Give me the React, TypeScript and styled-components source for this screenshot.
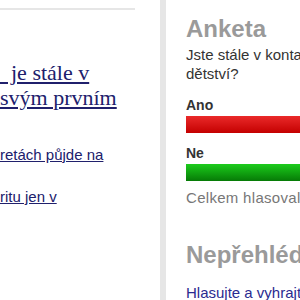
import React from "react";
import styled, { createGlobalStyle } from "styled-components";

const Global = createGlobalStyle`
  html, body { margin: 0; padding: 0; background: #fff; overflow: hidden; }
  body { font-family: "Liberation Sans", Arial, sans-serif; }
`;

const Page = styled.div`
  display: flex;
  width: 300px;
  height: 300px;
  overflow: hidden;
`;

const Main = styled.div`
  width: 160px;
  flex: none;
  padding-top: 8px;
  box-sizing: border-box;
  overflow: hidden;
`;

const TopRule = styled.div`
  width: 135px;
  height: 2px;
  background: #e6e6e6;
`;

const Headline = styled.a`
  display: block;
  margin-top: 50px;
  font-family: "Liberation Serif", Georgia, serif;
  font-size: 22px;
  line-height: 25px;
  color: #20206c;
  text-decoration: underline;
  white-space: nowrap;
`;

const StoryList = styled.ul`
  list-style: none;
  margin: 35px 0 0;
  padding: 0;
  display: flex;
  flex-direction: column;
  gap: 23px;
`;

const StoryLink = styled.a`
  display: block;
  font-size: 15px;
  line-height: 19px;
  color: #20206c;
  text-decoration: underline;
  white-space: nowrap;
`;

const Divider = styled.div`
  width: 6px;
  flex: none;
  background: #e6e6e6;
`;

const Sidebar = styled.aside`
  flex: 1;
  padding: 15px 0 0 20px;
  overflow: hidden;
  white-space: nowrap;
`;

const Heading = styled.h2<{ $gap?: number }>`
  margin: ${(p) => p.$gap ?? 0}px 0 0;
  font-size: 24px;
  line-height: 28px;
  font-weight: bold;
  color: #9a9a9a;
`;

const Question = styled.p`
  margin: 2px 0 0;
  font-size: 15px;
  line-height: 19px;
  color: #333;
`;

const Options = styled.div`
  margin-top: 14px;
  display: flex;
  flex-direction: column;
  gap: 12px;
`;

const Option = styled.div`
  display: flex;
  flex-direction: column;
  gap: 3px;
`;

const OptionLabel = styled.div`
  font-size: 14px;
  line-height: 16px;
  font-weight: bold;
  color: #333;
`;

const Bar = styled.div<{ $tone: "red" | "green" }>`
  height: 17px;
  width: 200px;
  background: ${(p) =>
    p.$tone === "red"
      ? "linear-gradient(#ea2a2a, #c40000)"
      : "linear-gradient(#1ccc1c, #067a06)"};
`;

const Total = styled.p`
  margin: 7px 0 0;
  font-size: 15px;
  line-height: 19px;
  letter-spacing: 0.3px;
  color: #777;
`;

const SideLink = styled.a`
  display: block;
  margin-top: 14px;
  font-size: 15px;
  line-height: 19px;
  color: #2b2b90;
  text-decoration: none;
`;

export default function App() {
  return (
    <>
      <Global />
      <Page>
        <Main>
          <TopRule />
          <Headline href="#">
            {"\u00a0\u00a0je stále v"}
            <br />
            svým prvním
          </Headline>
          <StoryList>
            <li>
              <StoryLink href="#">retách půjde na</StoryLink>
            </li>
            <li>
              <StoryLink href="#">ritu jen v</StoryLink>
            </li>
          </StoryList>
        </Main>
        <Divider />
        <Sidebar>
          <Heading>Anketa</Heading>
          <Question>
            Jste stále v kontaktu s přáteli z
            <br />
            dětství?
          </Question>
          <Options>
            <Option>
              <OptionLabel>Ano</OptionLabel>
              <Bar $tone="red" />
            </Option>
            <Option>
              <OptionLabel>Ne</OptionLabel>
              <Bar $tone="green" />
            </Option>
          </Options>
          <Total>Celkem hlasovalo: 1254</Total>
          <Heading $gap={34}>Nepřehlédněte</Heading>
          <SideLink href="#">Hlasujte a vyhrajte</SideLink>
        </Sidebar>
      </Page>
    </>
  );
}
